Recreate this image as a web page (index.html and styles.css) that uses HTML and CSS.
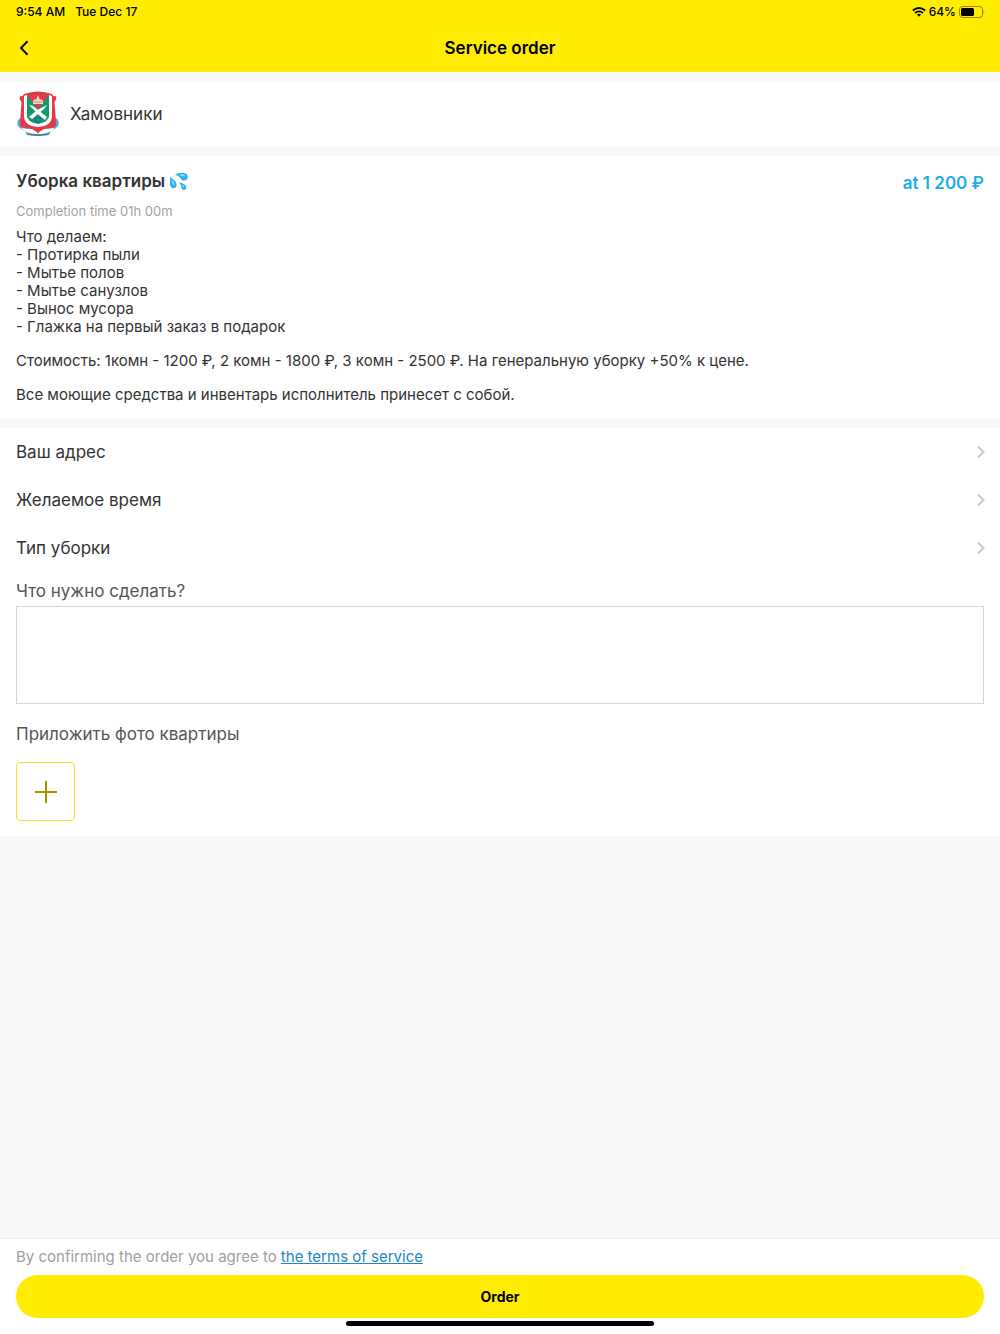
FILE: index.html
```html
<!DOCTYPE html>
<html lang="ru">
<head>
  <meta charset="UTF-8" />
  <meta name="viewport" content="width=device-width, initial-scale=1" />
  <title>Service order</title>
  <link rel="stylesheet" href="styles.css">
</head>
<body>

  <header class="header">
    <div class="status-bar">
      <span>9:54 AM</span>
      <span>Tue Dec 17</span>
      <div class="status-right">
        <svg width="14" height="10" viewBox="0 0 14 10" fill="none" stroke="#000" stroke-width="1.8">
          <path d="M0.8 3.5 Q7 -1.5 13.2 3.5" />
          <path d="M3 6 Q7 2.7 11 6" />
          <path d="M7 9.8 L4.9 7.6 Q7 6.1 9.1 7.6 Z" fill="#000" stroke="none" />
        </svg>
        <span>64%</span>
        <svg width="26" height="12" viewBox="0 0 26 12">
          <rect x="0.5" y="0.5" width="23" height="11" rx="3" fill="none" stroke="#000" stroke-opacity="0.4" />
          <rect x="2" y="2" width="13" height="8" rx="1.5" />
          <path d="M24.6 4 Q26 6 24.6 8 Z" fill-opacity="0.5" />
        </svg>
      </div>
    </div>
    <nav class="nav-bar">
      <button class="back" aria-label="Back">
        <svg width="10" height="16" viewBox="0 0 10 16" fill="none" stroke="#000" stroke-width="2">
          <path d="M8.5 1.2 L2 8 L8.5 14.8" />
        </svg>
      </button>
      <h1>Service order</h1>
    </nav>
  </header>

  <main>
    <section class="card district">
      <!-- district coat of arms -->
      <svg width="44" height="46" viewBox="0 0 44 46">
        <path d="M4 27 Q0 30 2 35 Q7 41 15 41 L13 32 Z M40 27 Q44 30 42 35 Q37 41 29 41 L31 32 Z" fill="#5ba3d8" />
        <path d="M9 40 Q22 45 35 40 L33 44 Q22 46 11 44 Z" fill="#5a9f8c" />
        <path d="M12 43 Q22 46 32 43" stroke="#3674b9" stroke-width="1" fill="none" />
        <path d="M8 3 Q22 -2 36 3 Q37 6 40 5 Q41 8 39 10 Q38 12 39 17 L40 33 Q40 37 34 37 Q26 38 22 42 Q18 38 10 37 Q4 37 4 33 L5 17 Q6 12 5 10 Q3 8 4 5 Q7 6 8 3 Z" fill="#e33a45" />
        <path d="M5 37 Q10 38 16 38 L22 43 L28 38 Q34 38 39 37 Q34 43 22 43 Q10 43 5 37 Z" fill="#fff" />
        <path d="M18 36 H26 L22 42 Z" fill="#e33a45" />
        <path d="M8 5 L11 4 V24 Q11 31 22 32 Q33 31 33 24 V4 L36 5 V25 Q36 35 22 36 Q8 35 8 25 Z" fill="#fff" />
        <path d="M11 4 Q22 0 33 4 V24 Q33 31 22 33 Q11 31 11 24 Z" fill="#129a68" />
        <path d="M11 4 Q22 0 33 4 L22 18 Z" fill="#e33a45" />
        <path d="M17 13 V10 L19 8 L20 9 L22 4 L24 9 L25 8 L27 10 V13 Z" fill="#eadbd0" />
        <path d="M18 11 H26" stroke="#d9826b" stroke-width="1" />
        <path d="M13 14 L17 15 L31 26 L29 29 L23 24 Z M31 14 L28 18 L16 28 L13 26 L21 19 Z" fill="#fff" />
        <circle cx="22" cy="29" r="2.4" fill="#18a08a" stroke="#3262a8" stroke-width="1.4" />
      </svg>
      <span>Хамовники</span>
    </section>

    <section class="card service">
      <div class="service-head">
        <h2>
          Уборка квартиры
          <svg width="20" height="20" viewBox="0 0 20 20" role="img" aria-label="sweat droplets">
            <path d="M6 4 C10 1 18 1 18.7 5 C19.3 9.5 14 11 12 8 C10.5 5.5 9 4.5 6 4 Z" fill="#2fb0ee" />
            <path d="M1 6 C4 8 8.5 11 7.5 15 C6.5 18.5 1.5 17.5 1 13.5 C0.8 11 1.5 9 1 6 Z" fill="#2fb0ee" />
            <path d="M10 11.5 C13 12 18 13.500 17.300 17 C16.500 20 12.500 19 12.300 16.500 C12.300 14.500 11.500 13 10 11.500 Z" fill="#2fb0ee" />
            <path d="M10 4 Q15 2 16.5 5 Q14 6 10 4 Z M2.5 9 Q6 12 5.5 14 Q3 14 2.5 9 Z M12.5 13.5 Q15.500 14.500 15.500 16.500 Q13.500 16.500 12.500 13.500 Z" fill="#8fe3fb" />
          </svg>
        </h2>
        <span class="price">at 1 200 ₽</span>
      </div>
      <p class="time">Completion time 01h 00m</p>
      <div class="description">
        <p>
          Что делаем:<br>
          - Протирка пыли<br>
          - Мытье полов<br>
          - Мытье санузлов<br>
          - Вынос мусора<br>
          - Глажка на первый заказ в подарок
        </p>
        <p>Стоимость: 1комн - 1200 ₽, 2 комн - 1800 ₽, 3 комн - 2500 ₽. На генеральную уборку +50% к цене.</p>
        <p>Все моющие средства и инвентарь исполнитель принесет с собой.</p>
      </div>
    </section>

    <form class="card" id="order-form">
      <button type="button" class="row">
        <span>Ваш адрес</span>
        <svg class="chevron" width="8" height="14" viewBox="0 0 8 14"><path d="M1 1.5 L6.5 7 L1 12.5" /></svg>
      </button>
      <button type="button" class="row">
        <span>Желаемое время</span>
        <svg class="chevron" width="8" height="14" viewBox="0 0 8 14"><path d="M1 1.5 L6.5 7 L1 12.5" /></svg>
      </button>
      <button type="button" class="row">
        <span>Тип уборки</span>
        <svg class="chevron" width="8" height="14" viewBox="0 0 8 14"><path d="M1 1.5 L6.5 7 L1 12.5" /></svg>
      </button>

      <div class="field">
        <label for="task">Что нужно сделать?</label>
        <textarea id="task"></textarea>
      </div>

      <div class="field photos">
        <span id="photo-label">Приложить фото квартиры</span>
        <button type="button" class="add-photo" aria-labelledby="photo-label">
          <svg width="22" height="22" viewBox="0 0 22 22" stroke="#ab8e00" stroke-width="2">
            <path d="M11 0 V22 M0 11 H22" />
          </svg>
        </button>
      </div>
    </form>
  </main>

  <footer class="footer">
    <p>By confirming the order you agree to <a href="#">the terms of service</a></p>
    <button type="submit" form="order-form" class="order">Order</button>
    <div class="home-indicator"></div>
  </footer>

</body>
</html>
```

FILE: styles.css
```css
* {
  box-sizing: border-box;
}

body {
  margin: 0;
  min-height: 100vh;
  display: flex;
  flex-direction: column;
  font-family: Inter, "Liberation Sans", sans-serif;
  font-size: 17px;
  line-height: 20px;
  color: #333;
  background: #f8f8f8;
}

h1, h2, p {
  margin: 0;
}

button {
  font: inherit;
  color: inherit;
  background: none;
  border: none;
  padding: 0;
  cursor: pointer;
}

svg {
  display: block;
  flex-shrink: 0;
}

.header {
  background: #ffec00;
  color: #000;
}

.status-bar {
  display: flex;
  align-items: center;
  gap: 10px;
  height: 24px;
  padding: 0 15px 0 16px;
  font-size: 12px;
  font-weight: 500;
}

.status-right {
  display: flex;
  align-items: center;
  gap: 3px;
  margin-left: auto;
}

.nav-bar {
  display: grid;
  grid-template-columns: 40px 1fr 40px;
  align-items: center;
  height: 48px;
}

.nav-bar h1 {
  font-size: 17px;
  font-weight: 600;
  text-align: center;
}

.back {
  padding: 8px 0 8px 19px;
}

main {
  flex: 1;
}

.card {
  margin-top: 10px;
  background: #fff;
}

.district {
  display: flex;
  align-items: center;
  gap: 10px;
  padding: 9px 16px;
}

.service {
  padding: 15px 16px 14px;
}

.service-head {
  display: flex;
  justify-content: space-between;
  align-items: flex-start;
}

.service-head h2 {
  display: flex;
  align-items: center;
  gap: 4px;
  font-size: 17px;
  font-weight: 600;
}

.price {
  font-weight: 600;
  line-height: 24px;
  color: #1badea;
}

.time {
  margin-top: 6px;
  font-size: 13px;
  color: #a3a3a3;
}

.description {
  display: flex;
  flex-direction: column;
  gap: 16px;
  margin-top: 7px;
  font-size: 15px;
  line-height: 18px;
}

.row {
  display: flex;
  justify-content: space-between;
  align-items: center;
  width: 100%;
  height: 48px;
  padding: 0 15px 0 16px;
}

.chevron {
  fill: none;
  stroke: #c7c7cc;
  stroke-width: 2;
}

.field {
  display: flex;
  flex-direction: column;
  gap: 5px;
  padding: 9px 16px 0;
  color: #555;
}

.field textarea {
  width: 100%;
  height: 98px;
  padding: 8px;
  border: 1px solid #d5d6d8;
  border-radius: 0;
  background: #fff;
  font: inherit;
  resize: none;
  outline: none;
}

.photos {
  gap: 18px;
  padding: 20px 16px 15px;
}

.add-photo {
  display: flex;
  justify-content: center;
  align-items: center;
  width: 59px;
  height: 59px;
  border: 1px solid #ffd92e;
  border-radius: 4px;
}

.footer {
  padding: 8px 16px;
  background: #fff;
  border-top: 1px solid #eef1f4;
  font-size: 15px;
  color: #a0a0a0;
}

.footer a {
  color: #1c87c9;
}

.order {
  display: block;
  width: 100%;
  height: 43px;
  margin-top: 8px;
  border-radius: 22px;
  background: #ffec00;
  color: #000;
  font-size: 14px;
  font-weight: 700;
}

.home-indicator {
  width: 308px;
  height: 5px;
  margin: 3px auto 0;
  border-radius: 3px;
  background: #000;
}
```
